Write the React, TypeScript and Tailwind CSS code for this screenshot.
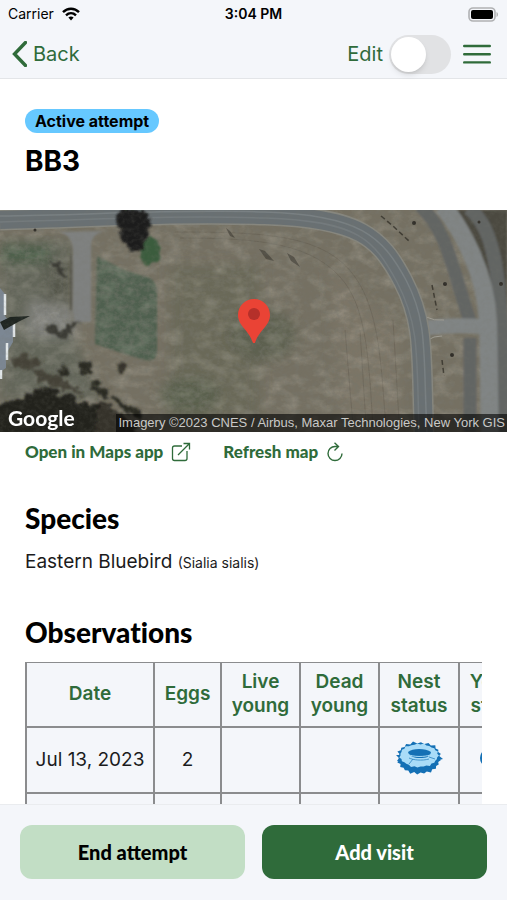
import React from "react";

const columns = ["Date", "Eggs", "Live young", "Dead young", "Nest status", "Young status"];

const widths = ["w-[128px]", "w-[67px]", "w-[79px]", "w-[79px]", "w-[80px]", "w-[80px]"];

const visits = [
  { id: 1, date: "Jul 13, 2023", eggs: "2", nest: true },
  { id: 2, date: "", eggs: "", nest: false },
];

// zigzag ring used for the twiggy edge of the nest
const spikes = (cx: number, cy: number, rx: number, ry: number, count: number, depth: number) =>
  Array.from({ length: count * 2 }, (_, i) => {
    const angle = (i * Math.PI) / count;
    const inset = i % 2 ? depth : (i % 3) * 0.6;
    const x = cx + Math.cos(angle) * (rx - inset);
    const y = cy + Math.sin(angle) * (ry - inset);
    return `${x.toFixed(1)},${y.toFixed(1)}`;
  }).join(" ");

const NestIcon = () => (
  <svg viewBox="0 0 48 36" className="mx-auto h-9 w-12" aria-hidden="true">
    <polygon points={spikes(24, 20, 22, 15, 19, 2.5)} fill="#1470b5" />
    <polygon points={spikes(24, 14, 22, 13, 17, 2.5)} fill="#1470b5" />
    <path d="M1 15l3 3-2 3 5 2 34 2 3-5 4-1-5-4z" fill="#1470b5" />
    <polygon points={spikes(24, 15.5, 20, 12.5, 19, 1.5)} fill="#a9dcf8" />
    <path d="M13 12c4-4 18-4 23 0-1 5-5 6-11 6s-11-2-12-6z" fill="#1470b5" />
    <path d="M13 14.500c5 2.500 17 2.500 22 .5" fill="none" stroke="#a9dcf8" strokeWidth="1" />
    <path d="M14 18c4 2 13 3 20 1M18 19l-4 5M34 17l6 2" fill="none" stroke="#2c83c0" strokeWidth="0.8" />
  </svg>
);

const StatusBar = () => (
  <div className="grid h-7 grid-cols-3 items-center px-2 text-sm text-black">
    <div className="flex items-center gap-2">
      Carrier
      <svg viewBox="0 0 18 14" className="h-3.5 w-[18px]" fill="none" stroke="#000" strokeWidth="2.4">
        <path d="M1 5.2C5.500 .6 12.500 .6 17 5.200" />
        <path d="M4 8.300c2.900-2.800 7.100-2.800 10 0" />
        <path d="M6.400 10.600c1.600-1.400 3.600-1.400 5.200 0L9 13.400z" fill="#000" stroke="none" />
      </svg>
    </div>
    <div className="text-center font-semibold">3:04 PM</div>
    <svg viewBox="0 0 31 15" className="h-[15px] w-[31px] justify-self-end" aria-hidden="true">
      <rect x="1" y="1" width="26" height="13" rx="4" fill="#f4f6fa" stroke="#b0b1b3" strokeWidth="1.6" />
      <rect x="3" y="3" width="22" height="9" rx="2" fill="#000" />
      <path d="M28.500 5v5c2-.8 2-4.200 0-5z" fill="#b0b1b3" />
    </svg>
  </div>
);

const Header = () => (
  <header className="shrink-0 border-b border-[#e3e5e8] bg-[#f4f6fa] pb-1">
    <StatusBar />
    <div className="flex h-[46px] items-end justify-between pr-4 pl-3 text-xl text-[#2f6b3a]">
      <button className="flex h-10 items-center gap-1.5">
        <svg viewBox="0 0 15 26" className="h-[26px] w-[15px]" fill="none" stroke="#2f6b3a" strokeWidth="3.400">
          <path d="M13.500 1.500 2.500 13l11 11.500" strokeLinecap="round" />
        </svg>
        Back
      </button>
      <div className="flex h-10 items-center">
        <label htmlFor="edit">Edit</label>
        <input
          id="edit"
          type="checkbox"
          role="switch"
          className="mr-3 ml-1.5 h-[39px] w-[62px] appearance-none rounded-full bg-[#e1e2e4] p-0.5 before:block before:size-[35px] before:rounded-full before:bg-white before:shadow-md checked:bg-[#2f6b3a] checked:before:translate-x-[23px]"
        />
        <button aria-label="Menu">
          <svg viewBox="0 0 28 20" className="h-5 w-7" stroke="#2f6b3a" strokeWidth="2.400" strokeLinecap="round">
            <path d="M1.200 2h25.600M1.200 10.200h25.600M1.200 18.400h25.600" />
          </svg>
        </button>
      </div>
    </div>
  </header>
);

const SatelliteMap = () => (
  <div className="relative h-[222px] overflow-hidden bg-[#706b5c]">
    <svg viewBox="0 0 507 222" preserveAspectRatio="xMidYMid slice" className="size-full" fill="none">
      <defs>
        <filter id="grain" x="0" y="0" width="100%" height="100%">
          <feTurbulence type="fractalNoise" baseFrequency="0.2 0.22" numOctaves="4" seed="8" />
          <feColorMatrix values="0 0 0 0 0.18  0 0 0 0 0.18  0 0 0 0 0.15  1.800 0 0 0 -0.68" />
        </filter>
        <filter id="light" x="0" y="0" width="100%" height="100%">
          <feTurbulence type="fractalNoise" baseFrequency="0.06 0.09" numOctaves="4" seed="21" />
          <feColorMatrix values="0 0 0 0 0.65  0 0 0 0 0.62  0 0 0 0 0.54  0 1.600 0 0 -0.68" />
        </filter>
        <filter id="ragged" x="-20%" y="-20%" width="140%" height="140%">
          <feTurbulence type="fractalNoise" baseFrequency="0.12" numOctaves="3" seed="3" />
          <feDisplacementMap in="SourceGraphic" scale="14" xChannelSelector="R" yChannelSelector="G" />
          <feGaussianBlur stdDeviation="0.8" />
        </filter>
        <filter id="soft" x="-30%" y="-30%" width="160%" height="160%">
          <feGaussianBlur stdDeviation="6" />
        </filter>
        <filter id="edge" x="-10%" y="-10%" width="120%" height="120%">
          <feGaussianBlur stdDeviation="1" />
        </filter>
      </defs>

      {/* fields */}
      <rect width="507" height="222" fill="#757062" />
      <g filter="url(#soft)">
        <path d="M0 30h72v90l28 70H0z" fill="#64665a" />
        <path d="M0 35h50v18H0z" fill="#4c5f49" />
        <path d="M170 55h90v160h-90z" fill="#6a6959" />
        <ellipse cx="262" cy="125" rx="34" ry="26" fill="#5d6150" />
        <ellipse cx="190" cy="185" rx="30" ry="18" fill="#5a614e" />
        <path d="M330 60l70 60v90h-60z" fill="#7c7466" />
        <path d="M30 90l45 8v28H25z" fill="#82837f" />
        <path d="M50 50h20v45H45z" fill="#54564c" />
      </g>
      <path
        d="M97 46l27 14 26 8q7 4 7 15v60q-1 9-12 7l-20-6-30-10z"
        fill="#4f6050"
        filter="url(#edge)"
      />
      <g stroke="#5b5549" strokeWidth="1" opacity=".4">
        <path d="M175 22c90 0 150 2 180 45 25 35 26 90 31 150" />
        <path d="M180 28c80 0 135 5 165 45 22 30 24 80 28 145" />
        <path d="M345 120l8 95M360 120l6 95M393 110l6 100" />
      </g>
      <rect width="507" height="222" filter="url(#light)" opacity=".35" />
      <rect width="507" height="222" filter="url(#grain)" opacity=".45" />

      {/* outer road with its verge */}
      <g filter="url(#edge)">
        <path d="M455 0c20 20 28 60 35 84v138h17V0z" fill="#4c4a41" />
        <path d="M420-4c28 24 34 70 50 115M470 128v94" stroke="#626563" strokeWidth="13" />
        <path d="M469-2c28 24 34 70 34 225" stroke="#626564" strokeWidth="14" />
        <path d="M443-4c16 20 43 64 45 116 1 38 1 78 2 112" stroke="#818585" strokeWidth="18" />
        <path d="M425 118q28-4 62-1" stroke="#818585" strokeWidth="15" />
      </g>
      <path d="M426 107q8 4 18 3M428 130q5-4 14-4" stroke="#a09e95" strokeWidth="1" />

      {/* main road */}
      <path d="M0 10C90 8 170 2 265 5s115 22 138 66c22 42 18 70 21 155" stroke="#87877f" strokeWidth="21" />
      <path d="M0 10C90 8 170 2 265 5s115 22 138 66c22 42 18 70 21 155" stroke="#697073" strokeWidth="18" />
      <path d="M0 6C90 5 170-1 265 2s117 24 141 68c22 42 17 70 21 155" stroke="#798083" strokeWidth="1.500" />
      <path d="M0 12C90 10 170 5 265 8s109 22 132 64c22 42 20 70 22 155" stroke="#747b7e" strokeWidth="1.500" />

      {/* driveway */}
      <g filter="url(#edge)">
        <path d="M58 22q14 2 15 18v60l2 12h16V36q0-12 14-15z" fill="#7f8180" />
        <path d="M71 45v55" stroke="#55554c" strokeWidth="2" />
      </g>

      {/* house */}
      <path d="M0 78l5 6v22l8 10v16l-7 12v14l-6 4z" fill="#7c8793" />
      <path d="M5 84v21M14 113v14M7 133v17M1 160v9" stroke="#e3e8ea" strokeWidth="2.500" />
      <path d="M0 112l10-5 20-1-12 6-14 8z" fill="#1e2420" />

      {/* trees and scrub */}
      <ellipse cx="151" cy="42" rx="11" ry="13" fill="#3b5b3d" filter="url(#ragged)" />
      <g filter="url(#ragged)" fill="#1c1e1b">
        <path d="M116 6l10-8 20 3 6 14-8 22-14 6-9-17z" />
        <path d="M-10 200l30-14 30-8 25 12 35 8 30 32H-10z" fill="#23211c" />
        <path d="M78 152l14 2-2 12-10-3zM90 172l16 4 4 12-14-6zM113 186l24 12 4 12-22-12zM58 154l12 6-6 8z" fill="#292a23" />
        <path d="M50 50l12 6 5 12-12-8zM45 114l16 4 16-5-8 14-14 2z" fill="#3a3b34" />
        <path d="M30 160l30 5 25 20-35-8zM8 150l16-6 20 8-18 10z" fill="#454338" />
        <path d="M100 190l35 24 8 12H95zM115 152l12 6-4 6z" fill="#34332a" />
      </g>
      <g fill="#302d28">
        <path d="M259 39l6 2 9 10-8-2zM287 43l7 4 6 10-9-6zM226 18l4 3 5 7-5-2z" opacity=".5" />
        <circle cx="414" cy="13" r="2" />
        <circle cx="445" cy="74" r="2" />
        <circle cx="452" cy="145" r="2" />
        <circle cx="501" cy="74" r="2" />
        <circle cx="479" cy="12" r="1.500" />
        <circle cx="35" cy="20" r="1.500" />
      </g>
      <path d="M381 6l12 10 16 15M432 75l5 25M442 150l2 16" stroke="#403d34" strokeWidth="1.500" strokeDasharray="5 3" />
      <rect width="507" height="222" filter="url(#grain)" opacity=".2" />

      {/* pin */}
      <path d="M254 89c9 0 16 7 16 16 0 11-11 15-15 28h-2c-4-13-15-17-15-28 0-9 7-16 16-16z" fill="#ea4335" />
      <circle cx="254" cy="104" r="6" fill="#b5302a" />
    </svg>
    <span className="absolute bottom-0.5 left-2 font-[Lato,sans-serif] text-[21px] leading-6 font-bold text-white drop-shadow-sm">
      Google
    </span>
    <span className="absolute right-0 bottom-0 bg-black/60 px-0.5 font-['Liberation_Sans',sans-serif] text-[13px] leading-[18px] whitespace-nowrap text-[#c9c9c7]">
      Imagery ©2023 CNES / Airbus, Maxar Technologies, New York GIS
    </span>
  </div>
);

const MapLinks = () => (
  <div className="flex gap-8 px-[25px] pt-2 font-[Lato,sans-serif] text-[17px] leading-6 font-black text-[#2f6b3a]">
    <a href="#maps" className="flex items-center gap-2">
      Open in Maps app
      <svg viewBox="0 0 20 20" className="size-5" fill="none" stroke="#2f6b3a" strokeWidth="1.300">
        <path d="M11 4H3.500Q1.500 4 1.500 6v10.500q0 2 2 2H14q2 0 2-2V9M7 13 18.500 1.500M12.500 1.500h6v6" />
      </svg>
    </a>
    <button className="flex items-center gap-2">
      Refresh map
      <svg viewBox="0 0 18 20" className="h-5 w-[18px]" fill="none" stroke="#2f6b3a" strokeWidth="1.400">
        <path d="M12 4.500H9a7 7 0 1 0 7 7M8.500.8l4 3.700-4 3.900" />
      </svg>
    </button>
  </div>
);

const Observations = () => (
  <div className="overflow-x-auto [scrollbar-width:none]">
    <table className="w-[514px] table-fixed border-collapse bg-[#f4f6fa] text-center text-[19px] leading-6">
      <thead>
        <tr className="h-16 text-[#2f6b3a]">
          {columns.map((name, i) => (
            <th key={name} className={`${widths[i]} border-2 border-t border-[#8b8c8e] font-semibold`}>
              {name}
            </th>
          ))}
        </tr>
      </thead>
      <tbody>
        {visits.map((visit) => (
          <tr key={visit.id} className="h-[66px]">
            <td className="border-2 border-[#8b8c8e] whitespace-nowrap">{visit.date}</td>
            <td className="border-2 border-[#8b8c8e]">{visit.eggs}</td>
            <td className="border-2 border-[#8b8c8e]"></td>
            <td className="border-2 border-[#8b8c8e]"></td>
            <td className="border-2 border-[#8b8c8e] pb-1">{visit.nest && <NestIcon />}</td>
            <td className="border-2 border-[#8b8c8e] pb-1">
              {visit.nest && (
                <svg viewBox="0 0 38 36" className="mx-auto h-9 w-[38px]">
                  <ellipse cx="19" cy="18" rx="18" ry="12" fill="#a9dcf8" stroke="#1470b5" strokeWidth="2" />
                </svg>
              )}
            </td>
          </tr>
        ))}
      </tbody>
    </table>
  </div>
);

const headingClass =
  "font-[Lato,sans-serif] text-[28px] leading-9 font-black text-black [font-variant-ligatures:none]";

const App = () => {
  return (
    <div className="flex h-screen flex-col bg-white font-[Inter,sans-serif] text-[#1b1b1c]">
      <Header />
      <main className="min-h-0 flex-1 overflow-y-auto [scrollbar-width:none]">
        <div className="px-[25px] pt-[30px] pb-[31px]">
          <span className="inline-block rounded-full bg-[#66c8ff] px-2.5 text-base leading-6 font-bold text-black">
            Active attempt
          </span>
          <h1 className="mt-2.5 text-[28px] leading-9 font-bold text-black">BB3</h1>
        </div>
        <SatelliteMap />
        <MapLinks />
        <section className="px-[25px] pt-9">
          <h2 className={headingClass}>Species</h2>
          <p className="mt-2.5 text-[19px] leading-8">
            Eastern Bluebird <span className="text-sm">(Sialia sialis)</span>
          </p>
        </section>
        <section className="px-[25px] pt-9">
          <h2 className={`mb-3 ${headingClass}`}>Observations</h2>
          <Observations />
        </section>
      </main>
      <footer className="flex shrink-0 gap-[17px] border-t border-[#eaecef] bg-[#f4f6fa] px-5 pt-5 pb-[21px] font-[Lato,sans-serif] text-xl font-black">
        <button className="h-[54px] flex-1 rounded-xl bg-[#c2dec5] text-black">End attempt</button>
        <button className="h-[54px] flex-1 rounded-xl bg-[#2f6b3a] text-white">Add visit</button>
      </footer>
    </div>
  );
};

export default App;
